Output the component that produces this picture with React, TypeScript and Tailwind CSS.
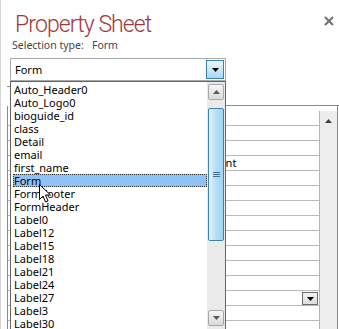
import React from 'react';

const items = [
  'Auto_Header0', 'Auto_Logo0', 'bioguide_id', 'class', 'Detail', 'email', 'first_name',
  'Form', 'FormFooter', 'FormHeader', 'Label0', 'Label12', 'Label15', 'Label18',
  'Label21', 'Label24', 'Label27', 'Label3', 'Label30', 'Label33',
];

// underlying property grid rows (mostly hidden by the open list)
const props = [
  ['Record Source', ''], ['Caption', ''], ['Pop Up', 'No'], ['Back Style', 'Transparent'],
  ['Modal', 'No'], ['Allow Form View', 'Yes'], ['Allow Datasheet View', 'No'],
  ['Allow Layout View', 'Yes'], ['Picture', '(none)'], ['Picture Tiling', 'No'],
  ['Auto Center', 'No'], ['Auto Resize', 'Yes'], ['Picture Size Mode', 'Clip'],
  ['Width', '7.5"'], ['Fit to Screen', 'Yes'], ['Cycle', ''],
];

function Triangle({ up, color = '#000' }: { up?: boolean; color?: string }) {
  return (
    <svg width="7" height="4" viewBox="0 0 7 4">
      <path d={up ? 'M0 4 L3.5 0 L7 4 Z' : 'M0 0 L7 0 L3.5 4 Z'} fill={color} />
    </svg>
  );
}

function ScrollButton({ up }: { up?: boolean }) {
  return (
    <div className="h-[16px] w-[16px] shrink-0 flex items-center justify-center rounded-[2px] border border-[#a7a7a7] bg-gradient-to-b from-[#f6f6f6] to-[#d9d9d9]">
      <Triangle up={up} color="#5a5a5a" />
    </div>
  );
}

export default function App() {
  return (
    <div className="relative w-[339px] h-[329px] overflow-hidden bg-white border-l border-[#d6d6d6] font-['Noto_Sans',sans-serif] flex flex-col">
      {/* header */}
      <div className="shrink-0 flex justify-between items-start pl-[14px] pr-[3px] pt-[13px] h-[38px]">
        <div className="text-[23px] leading-[24px] font-light tracking-[-0.9px] text-[#a4373a] font-['Roboto',sans-serif]">Property Sheet</div>
        <svg width="10" height="10" viewBox="0 0 10 10" className="mt-[3px] mr-[2px]">
          <path d="M1 1 L9 9 M9 1 L1 9" stroke="#707070" strokeWidth="2" />
        </svg>
      </div>
      <div className="shrink-0 pl-[11px] text-[10.5px] leading-[14px] text-[#444]">
        Selection type:&nbsp;&nbsp; Form
      </div>

      {/* combo */}
      <div className="shrink-0 ml-[9px] mt-[6px] w-[216px] h-[23px] border border-[#a9a9a9] flex items-center justify-between pl-[4px] pr-[1px]">
        <span className="text-[11px] leading-none text-black">Form</span>
        <div className="w-[18px] h-[19px] border border-[#3c7fb1] bg-gradient-to-b from-[#eaf6fd] to-[#a7d9f5] flex items-center justify-center">
          <Triangle />
        </div>
      </div>

      {/* tabs */}
      <div className="shrink-0 mt-[5px] flex h-[20px]">
        <div className="ml-[6px] w-[219px] border-t border-r border-[#8a8a8a]" />
        <div className="flex-1 border-b border-[#8a8a8a]" />
      </div>

      {/* panel */}
      <div className="ml-[6px] mr-[1px] flex-1 min-h-0 overflow-hidden border-l border-r border-[#8a8a8a] pt-[5px] flex">
        <div className="flex-1 flex flex-col">
          {props.map(([name, value], i) => (
            <div key={i} className="shrink-0 h-[15px] border-b border-[#b9b9b9] flex text-[11px] leading-[14px] text-black">
              <div className="w-[162px] pl-[4px] border-r border-[#b9b9b9] whitespace-nowrap overflow-hidden">{name}</div>
              <div className="flex-1 pl-[4px] flex justify-between">
                <span>{value}</span>
                {i === 12 && (
                  <div className="w-[16px] h-[13px] mt-[1px] mr-[1px] border border-[#6b6b6b] bg-gradient-to-b from-[#f3f3f3] to-[#dcdcdc] flex items-center justify-center">
                    <Triangle />
                  </div>
                )}
              </div>
            </div>
          ))}
        </div>
        <div className="w-[18px] border-l border-[#b5b5b5] bg-[#ededed] flex justify-center pt-[8px]">
          <Triangle up color="#404040" />
        </div>
      </div>

      {/* open dropdown list */}
      <div className="absolute left-[9px] top-[81px] w-[216px] h-[260px] border border-[#646464] bg-white flex">
        <div className="flex-1 pt-[1px] pl-[2px]">
          {items.map((it) => (
            <div
              key={it}
              className={
                'h-[13px] text-[11px] leading-[13px] text-black pl-[1px] ' +
                (it === 'Form' ? 'bg-[#8fc3f7] outline-1 outline-dotted outline-[#333] -outline-offset-1' : '')
              }
            >
              {it}
            </div>
          ))}
        </div>
        <div className="w-[18px] bg-[#eaeaea] flex flex-col items-center pt-[2px] pb-[14px]">
          <ScrollButton up />
          <div className="shrink-0 mt-[8px] w-[16px] h-[133px] rounded-[2px] border border-[#3c7fb1] bg-gradient-to-r from-[#e3f3fc] via-[#b6def6] to-[#a3d4f2] flex flex-col items-center justify-center gap-[1px]">
            <div className="w-[7px] h-[1px] bg-[#3d6f96]" />
            <div className="w-[7px] h-[1px] bg-[#3d6f96]" />
            <div className="w-[7px] h-[1px] bg-[#3d6f96]" />
          </div>
          <div className="flex-1" />
          <ScrollButton />
        </div>
      </div>

      {/* mouse cursor */}
      <svg className="absolute left-[38px] top-[184px]" width="13" height="20" viewBox="0 0 13 20">
        <path d="M0.5 0.5 L0.5 15.5 L4 12 L6.5 18 L9 17 L6.5 11 L11.5 11 Z" fill="#fff" stroke="#000" strokeWidth="1" strokeLinejoin="round" />
      </svg>
    </div>
  );
}
